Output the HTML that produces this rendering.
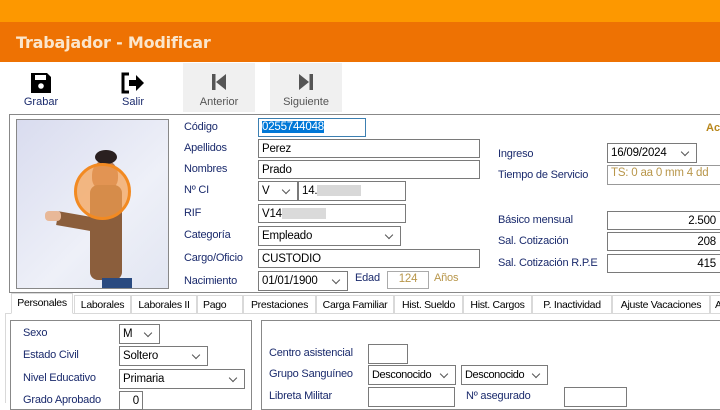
<!DOCTYPE html>
<html><head><meta charset="utf-8"><style>
*{margin:0;padding:0;box-sizing:border-box}
body{width:720px;height:402px;overflow:hidden;background:#fff;font-family:"Liberation Sans",Arial,sans-serif;font-size:11px;position:relative;color:#000}
.a{position:absolute}
.l{position:absolute;color:#1a2a6c;font-size:11px;white-space:nowrap;letter-spacing:-0.2px}
.i{position:absolute;border:1px solid #7a7a7a;background:#fff;height:19px;padding:3px 3px 0;font-size:11.5px;white-space:nowrap;overflow:hidden;letter-spacing:-0.2px}
.dd::after{content:"";position:absolute;right:8px;top:5px;width:5px;height:5px;border-right:1px solid #555;border-bottom:1px solid #555;transform:rotate(45deg)}
.tab{position:absolute;top:295px;height:18px;border:1px solid #d9d9d9;border-bottom:none;background:#fff;padding-top:3px;font-size:10.5px;letter-spacing:-0.3px;color:#000;white-space:nowrap;text-align:center;overflow:hidden}
.btn{position:absolute;top:63px;height:49px;text-align:center;font-size:11px;color:#1a2a6c}
</style></head><body>
<div class="a" style="left:0;top:0;width:720px;height:22px;background:#fd9800"></div>
<div class="a" style="left:0;top:22px;width:720px;height:40px;background:#ee7203"></div>
<div class="a" style="left:16px;top:33px;color:#fbe6cc;font-size:16px;font-weight:bold;font-family:'DejaVu Sans',sans-serif;letter-spacing:-0.2px">Trabajador - Modificar</div>

<div class="btn" style="left:18px;width:46px"><svg width="24" height="24" viewBox="0 0 24 24" style="margin-top:8px"><path d="M2 2h16l4 4v16H2z" fill="#000"/><rect x="6" y="4" width="11" height="5" fill="#fff"/><circle cx="12" cy="15" r="2.8" fill="#fff"/></svg><div style="margin-top:-2px">Grabar</div></div>
<div class="btn" style="left:110px;width:46px"><svg width="26" height="24" viewBox="0 0 26 24" style="margin-top:8px"><path d="M9 3H3v18h6" stroke="#000" stroke-width="3" fill="none"/><path d="M9 9h7V4l8 8-8 8v-5H9z" fill="#000"/></svg><div style="margin-top:-2px">Salir</div></div>
<div class="btn" style="left:183px;width:72px;background:#f0f0f0;color:#555"><svg width="20" height="20" viewBox="0 0 20 20" style="margin-top:9px"><rect x="3" y="2" width="3.5" height="16" fill="#555"/><path d="M17 2v16L7 10z" fill="#555"/></svg><div style="margin-top:1px">Anterior</div></div>
<div class="btn" style="left:270px;width:72px;background:#f0f0f0;color:#555"><svg width="20" height="20" viewBox="0 0 20 20" style="margin-top:9px"><rect x="13.5" y="2" width="3.5" height="16" fill="#555"/><path d="M3 2v16l10-8z" fill="#555"/></svg><div style="margin-top:1px">Siguiente</div></div>

<div class="a" style="left:9px;top:114px;width:720px;height:179px;border:1px solid #888"></div>
<div class="a" style="left:16px;top:119px;width:153px;height:170px;border:1px solid #888;background:linear-gradient(135deg,#d9dcef,#eef0f8 60%,#e2e6f2);overflow:hidden">
 <div class="a" style="left:75px;top:40px;width:26px;height:30px;border-radius:50% 50% 40% 40%;background:#b27a5a"></div>
 <div class="a" style="left:78px;top:30px;width:22px;height:14px;border-radius:50%;background:#2a2020"></div>
 <div class="a" style="left:73px;top:65px;width:32px;height:95px;background:#8b5e3c;border-radius:8px"></div>
 <div class="a" style="left:40px;top:95px;width:45px;height:14px;background:#8b5e3c;transform:rotate(10deg)"></div>
 <div class="a" style="left:28px;top:91px;width:16px;height:10px;background:#e8b898;border-radius:4px"></div>
 <div class="a" style="left:85px;top:158px;width:30px;height:12px;background:#2a4a80"></div>
 <div class="a" style="left:57px;top:43px;width:57px;height:57px;border-radius:50%;border:3px solid #f28a22;background:rgba(246,160,80,.7)"></div>
</div>

<div class="l" style="left:184px;top:121px">Código</div>
<div class="i" style="left:258px;top:118px;width:108px;border-color:#3c7fb1;padding-top:2px"><span style="background:#0078d7;color:#fff">0255744048</span></div>
<div class="l" style="left:184px;top:142px">Apellidos</div>
<div class="i" style="left:258px;top:139px;width:222px">Perez</div>
<div class="l" style="left:184px;top:163px">Nombres</div>
<div class="i" style="left:258px;top:160px;width:222px">Prado</div>
<div class="l" style="left:184px;top:184px">Nº CI</div>
<div class="i dd" style="left:258px;top:181px;width:40px;height:20px">V</div>
<div class="i" style="left:298px;top:181px;width:108px;height:20px">14.<span style="display:inline-block;width:44px;height:11px;background:#d8d8d8;vertical-align:middle"></span></div>
<div class="l" style="left:184px;top:207px">RIF</div>
<div class="i" style="left:258px;top:204px;width:148px">V14<span style="display:inline-block;width:44px;height:11px;background:#dadada;vertical-align:middle"></span></div>
<div class="l" style="left:184px;top:229px">Categoría</div>
<div class="i dd" style="left:258px;top:226px;width:143px;height:20px">Empleado</div>
<div class="l" style="left:184px;top:252px">Cargo/Oficio</div>
<div class="i" style="left:258px;top:249px;width:222px">CUSTODIO</div>
<div class="l" style="left:184px;top:275px">Nacimiento</div>
<div class="i dd" style="left:258px;top:271px;width:90px;height:20px">01/01/1900</div>
<div class="l" style="left:355px;top:272px">Edad</div>
<div class="i" style="left:387px;top:271px;width:42px;height:18px;border-color:#aaa;color:#b8964a;text-align:center;padding-top:1px">124</div>
<div class="l" style="left:434px;top:272px;color:#b8964a">Años</div>

<div class="a" style="left:706px;top:122px;color:#b8861a;font-weight:bold;font-size:11px">Ac</div>
<div class="l" style="left:498px;top:148px">Ingreso</div>
<div class="i dd" style="left:607px;top:143px;width:90px;height:20px">16/09/2024</div>
<div class="l" style="left:498px;top:169px">Tiempo de Servicio</div>
<div class="i" style="left:607px;top:165px;width:120px;height:20px;border-color:#999;color:#b8964a;padding-top:1px">TS: 0 aa 0 mm 4 dd</div>
<div class="l" style="left:498px;top:214px">Básico mensual</div>
<div class="i" style="left:607px;top:211px;width:120px;text-align:right;padding-right:10px">2.500</div>
<div class="l" style="left:498px;top:235px">Sal. Cotización</div>
<div class="i" style="left:607px;top:232px;width:120px;text-align:right;padding-right:10px">208</div>
<div class="l" style="left:498px;top:257px">Sal. Cotización R.P.E</div>
<div class="i" style="left:607px;top:254px;width:120px;text-align:right;padding-right:10px">415</div>

<div class="a" style="left:5px;top:313px;width:720px;height:90px;border-top:1px solid #d9d9d9;border-left:1px solid #d9d9d9"></div>
<div class="tab" style="left:11px;top:293px;height:21px;width:62px;border-bottom:1px solid #fff">Personales</div>
<div class="tab" style="left:74px;width:57px">Laborales</div>
<div class="tab" style="left:131px;width:66px">Laborales II</div>
<div class="tab" style="left:197px;width:46px;text-align:left;padding-left:5px">Pago</div>
<div class="tab" style="left:243px;width:73px">Prestaciones</div>
<div class="tab" style="left:316px;width:78px">Carga Familiar</div>
<div class="tab" style="left:394px;width:69px">Hist. Sueldo</div>
<div class="tab" style="left:463px;width:69px">Hist. Cargos</div>
<div class="tab" style="left:532px;width:80px">P. Inactividad</div>
<div class="tab" style="left:612px;width:98px">Ajuste Vacaciones</div>
<div class="tab" style="left:710px;width:20px;text-align:left;padding-left:4px">A</div>

<div class="a" style="left:10px;top:320px;width:242px;height:90px;border:1px solid #888"></div>
<div class="a" style="left:261px;top:320px;width:470px;height:90px;border:1px solid #888"></div>
<div class="l" style="left:23px;top:327px">Sexo</div>
<div class="i dd" style="left:119px;top:324px;width:41px;height:20px">M</div>
<div class="l" style="left:23px;top:349px">Estado Civil</div>
<div class="i dd" style="left:119px;top:346px;width:89px;height:20px">Soltero</div>
<div class="l" style="left:23px;top:372px">Nivel Educativo</div>
<div class="i dd" style="left:119px;top:369px;width:126px;height:20px">Primaria</div>
<div class="l" style="left:23px;top:394px">Grado Aprobado</div>
<div class="i" style="left:119px;top:391px;width:24px;text-align:right">0</div>

<div class="l" style="left:269px;top:347px">Centro asistencial</div>
<div class="i" style="left:368px;top:344px;width:40px;height:20px"></div>
<div class="l" style="left:269px;top:368px">Grupo Sanguíneo</div>
<div class="i dd" style="left:368px;top:365px;width:88px;height:20px;font-size:11px;letter-spacing:-0.4px">Desconocido</div>
<div class="i dd" style="left:461px;top:365px;width:87px;height:20px;font-size:11px;letter-spacing:-0.4px">Desconocido</div>
<div class="l" style="left:269px;top:390px">Libreta Militar</div>
<div class="i" style="left:368px;top:387px;width:87px;height:20px"></div>
<div class="l" style="left:466px;top:390px">Nº asegurado</div>
<div class="i" style="left:564px;top:387px;width:63px;height:20px"></div>
</body></html>
